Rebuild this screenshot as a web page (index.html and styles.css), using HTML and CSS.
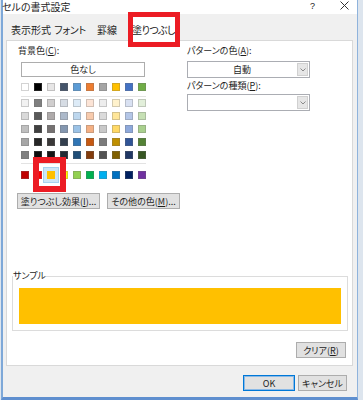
FILE: index.html
```html
<!DOCTYPE html>
<html lang="ja">
<head>
<meta charset="utf-8">
<title>セルの書式設定</title>
<link rel="stylesheet" href="styles.css">
</head>
<body>
<div class="dialog">
  <div class="titlebar">
    <span class="title">セルの書式設定</span>
    <span class="help">?</span>
    <svg class="close" width="9" height="9" viewBox="0 0 9 9"><path d="M0.5 0.5L8.5 8.5M8.5 0.5L0.5 8.5" stroke="#333" stroke-width="1" fill="none"/></svg>
  </div>
  <div class="tabs">
    <div class="tab t1">表示形式</div>
    <div class="tab t2">フォント</div>
    <div class="tab t3">罫線</div>
    <div class="tab t4 active">塗りつぶし</div>
  </div>
  <div class="panel">
    <div class="cols">
      <div class="left">
        <div class="label bg-label">背景色(<u>C</u>):</div>
        <div class="nocolor">色なし</div>
        <div class="palette">
          <div class="row">
            <span class="swatch" style="background:#ffffff"></span><span class="swatch" style="background:#000000"></span><span class="swatch" style="background:#e7e6e6"></span><span class="swatch" style="background:#44546a"></span><span class="swatch" style="background:#5b9bd5"></span><span class="swatch" style="background:#ed7d31"></span><span class="swatch" style="background:#a5a5a5"></span><span class="swatch" style="background:#ffc000"></span><span class="swatch" style="background:#4472c4"></span><span class="swatch" style="background:#70ad47"></span>
          </div>
          <div class="sep sep1"></div>
          <div class="tints">
            <div class="row">
              <span class="swatch" style="background:#f2f2f2"></span><span class="swatch" style="background:#7f7f7f"></span><span class="swatch" style="background:#d0cece"></span><span class="swatch" style="background:#d6dce4"></span><span class="swatch" style="background:#ddebf7"></span><span class="swatch" style="background:#fce4d6"></span><span class="swatch" style="background:#ededed"></span><span class="swatch" style="background:#fff2cc"></span><span class="swatch" style="background:#d9e1f2"></span><span class="swatch" style="background:#e2efda"></span>
            </div>
            <div class="row">
              <span class="swatch" style="background:#d9d9d9"></span><span class="swatch" style="background:#595959"></span><span class="swatch" style="background:#aeaaaa"></span><span class="swatch" style="background:#acb9ca"></span><span class="swatch" style="background:#bdd7ee"></span><span class="swatch" style="background:#f8cbad"></span><span class="swatch" style="background:#dbdbdb"></span><span class="swatch" style="background:#ffe699"></span><span class="swatch" style="background:#b4c6e7"></span><span class="swatch" style="background:#c6e0b4"></span>
            </div>
            <div class="row">
              <span class="swatch" style="background:#bfbfbf"></span><span class="swatch" style="background:#404040"></span><span class="swatch" style="background:#757171"></span><span class="swatch" style="background:#8497b0"></span><span class="swatch" style="background:#9bc2e6"></span><span class="swatch" style="background:#f4b084"></span><span class="swatch" style="background:#c9c9c9"></span><span class="swatch" style="background:#ffd966"></span><span class="swatch" style="background:#8ea9db"></span><span class="swatch" style="background:#a9d08e"></span>
            </div>
            <div class="row">
              <span class="swatch" style="background:#a6a6a6"></span><span class="swatch" style="background:#262626"></span><span class="swatch" style="background:#3a3838"></span><span class="swatch" style="background:#333f4f"></span><span class="swatch" style="background:#2f75b5"></span><span class="swatch" style="background:#c65911"></span><span class="swatch" style="background:#7b7b7b"></span><span class="swatch" style="background:#bf8f00"></span><span class="swatch" style="background:#305496"></span><span class="swatch" style="background:#548235"></span>
            </div>
            <div class="row">
              <span class="swatch" style="background:#808080"></span><span class="swatch" style="background:#0d0d0d"></span><span class="swatch" style="background:#161616"></span><span class="swatch" style="background:#222b35"></span><span class="swatch" style="background:#1f4e78"></span><span class="swatch" style="background:#833c0c"></span><span class="swatch" style="background:#525252"></span><span class="swatch" style="background:#806000"></span><span class="swatch" style="background:#203764"></span><span class="swatch" style="background:#375623"></span>
            </div>
          </div>
          <div class="sep sep2"></div>
          <div class="row">
            <span class="swatch" style="background:#c00000"></span><span class="swatch" style="background:#ff0000"></span><span class="swatch selected" style="background:#ffc000"></span><span class="swatch" style="background:#ffff00"></span><span class="swatch" style="background:#92d050"></span><span class="swatch" style="background:#00b050"></span><span class="swatch" style="background:#00b0f0"></span><span class="swatch" style="background:#0070c0"></span><span class="swatch" style="background:#002060"></span><span class="swatch" style="background:#7030a0"></span>
          </div>
        </div>
        <div class="actions">
          <div class="btn fx">塗りつぶし効果(<u>I</u>)...</div>
          <div class="btn more">その他の色(<u>M</u>)...</div>
        </div>
      </div>
      <div class="right">
        <div class="label">パターンの色(<u>A</u>):</div>
        <div class="select">
          <span class="value">自動</span>
          <span class="arrow"><svg width="6" height="4" viewBox="0 0 6 4"><path d="M0.5 0.5L3 3L5.5 0.5" stroke="#8a8a8a" stroke-width="1" fill="none"/></svg></span>
        </div>
        <div class="label label2">パターンの種類(<u>P</u>):</div>
        <div class="select select2">
          <span class="value"></span>
          <span class="arrow"><svg width="6" height="4" viewBox="0 0 6 4"><path d="M0.5 0.5L3 3L5.5 0.5" stroke="#8a8a8a" stroke-width="1" fill="none"/></svg></span>
        </div>
      </div>
    </div>
    <fieldset class="sample">
      <legend>サンプル</legend>
      <div class="sample-fill"></div>
    </fieldset>
    <div class="clear-row">
      <div class="btn clear">クリア(<u>R</u>)</div>
    </div>
  </div>
  <div class="footer">
    <div class="btn ok">OK</div>
    <div class="btn cancel">キャンセル</div>
  </div>
  <div class="mark mark-tab"></div>
  <div class="mark mark-color"></div>
</div>
</body>
</html>
```
FILE: styles.css
```css
* { box-sizing: border-box; }

html, body {
  margin: 0;
  padding: 0;
}

body {
  width: 363px;
  height: 400px;
  overflow: hidden;
  background: #dde5ee;
  font-family: "Noto Sans CJK JP", "Noto Sans", sans-serif;
  font-feature-settings: "palt";
  font-size: 9px;
  color: #1e1e1e;
}

u { text-decoration: underline; text-underline-offset: 1px; }

.dialog {
  position: relative;
  margin-left: 1px;
  width: 357px;
  height: 400px;
  background: #f0f0f0;
  border-left: 2px solid #7ea8d8;
  border-right: 1px solid #8fb3dc;
  border-bottom: 3px solid #5f8fcf;
  display: flex;
  flex-direction: column;
}

.titlebar {
  height: 14px;
  background: #ffffff;
  display: flex;
  align-items: center;
  font-size: 10px;
}

.title {
  flex: 1;
  line-height: 12px;
  margin-top: -1px;
  margin-left: -1px;
}

.help {
  font-family: "Liberation Sans", sans-serif;
  font-size: 9px;
  line-height: 10px;
  margin-top: -3px;
  margin-right: 25px;
}

.close {
  margin-top: -3px;
  margin-right: 8px;
}

.tabs {
  display: flex;
  height: 26px;
  padding-top: 4px;
  padding-left: 3px;
}

.tab {
  display: flex;
  align-items: center;
  justify-content: center;
  font-size: 10px;
  color: #222;
  white-space: nowrap;
}

.t1 { width: 50px; }
.t2 { width: 28px; letter-spacing: -0.3px; }
.t3 { width: 46px; }
.t4 { width: 47px; letter-spacing: -0.6px; }

.tab.active {
  background: #ffffff;
  border: 1px solid #d9d9d9;
  border-bottom: none;
  margin-top: -2px;
  margin-bottom: -1px;
  position: relative;
  z-index: 1;
}

.panel {
  margin-left: 3px;
  width: 347px;
  border: 1px solid #d9d9d9;
  background: #ffffff;
  padding: 4px 4px 7px 5px;
}

.cols {
  display: flex;
  padding-left: 5px;
}

.left { width: 170px; }

.label {
  height: 12px;
  line-height: 12px;
  white-space: nowrap;
}

.bg-label { margin-left: 1px; }

.nocolor {
  margin: 5px 0 0 4px;
  width: 124px;
  height: 15px;
  border: 1px solid #adadad;
  background: #ffffff;
  display: flex;
  align-items: center;
  justify-content: center;
}

.palette {
  margin: 6px 0 0 4px;
  width: 125px;
}

.row {
  display: flex;
  gap: 5px;
  height: 8px;
}

.swatch {
  width: 8px;
  height: 8px;
  box-shadow: inset 0 0 0 1px rgba(110, 110, 110, 0.3);
}

.swatch.selected {
  box-shadow: 0 0 0 3px #cde6f6, 0 0 0 4px #a6d2ef;
}

.sep { height: 1px; background: #e3e3e3; }
.sep1 { margin: 5px 0 2px; }
.sep2 { margin: 4px 0 7px; }

.tints {
  display: flex;
  flex-direction: column;
  gap: 5px;
}

.actions {
  display: flex;
  gap: 7px;
  margin-top: 14px;
}

.btn {
  height: 16px;
  border: 1px solid #adadad;
  background: #e1e1e1;
  display: flex;
  align-items: center;
  justify-content: center;
  white-space: nowrap;
}

.fx { width: 83px; }
.more { width: 73px; }

.select {
  margin-top: 4px;
  width: 123px;
  height: 17px;
  border: 1px solid #abadb3;
  background: #ffffff;
  display: flex;
}

.select2 { margin-top: 2px; }
.label2 { margin-top: 2px; }

.select .value {
  flex: 1;
  text-align: center;
  line-height: 15px;
}

.select .arrow {
  width: 11px;
  margin: 1px;
  background: #e6e6e6;
  border: 1px solid #d0d0d0;
  display: flex;
  align-items: center;
  justify-content: center;
}

.sample {
  margin: 61px 0 0 0;
  padding: 0 0 6px 0;
  border: 1px solid #dcdcdc;
  min-width: 0;
}

.sample legend {
  padding: 0;
  line-height: 12px;
  font-size: 9px;
}

.sample-fill {
  margin: 6px 6px 0 6px;
  height: 36px;
  background: #ffc000;
}

.clear-row {
  display: flex;
  justify-content: flex-end;
  margin-top: 11px;
  padding-right: 2px;
}

.clear { width: 50px; }

.footer {
  display: flex;
  justify-content: flex-end;
  gap: 3px;
  margin-top: 9px;
  padding-right: 10px;
}

.ok {
  width: 52px;
  border-color: #0078d7;
  box-shadow: inset 0 0 0 1px #8ab9e6;
}

.cancel { width: 49px; }

.mark {
  position: absolute;
  border: 5px solid #ec1c24;
  z-index: 5;
}

.mark-tab {
  left: 125px;
  top: 12px;
  width: 52px;
  height: 35px;
}

.mark-color {
  left: 30px;
  top: 157px;
  width: 33px;
  height: 35px;
  border-width: 6px;
}
```
